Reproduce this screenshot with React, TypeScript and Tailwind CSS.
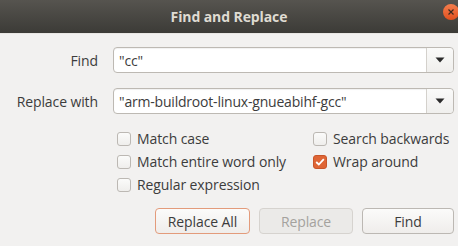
import React from "react";

const Caret = () => (
  <svg width="10" height="6" viewBox="0 0 10 6">
    <path d="M0.5 0.5 L9.5 0.5 L5 5.5 Z" fill="#2b2b2b" />
  </svg>
);

function Combo({ value }: { value: string }) {
  return (
    <div className="flex h-[26px] flex-1 rounded-[4px] border border-[#bdb9b3] bg-white shadow-[inset_0_1px_1px_rgba(0,0,0,0.06)]">
      <div className="flex flex-1 items-center whitespace-nowrap pl-[5px] text-[14px] tracking-[-0.2px] text-[#3c3c3c]">{value}</div>
      <div className="flex w-[27px] items-center justify-center rounded-r-[4px] border-l border-[#d4d1cc] bg-gradient-to-b from-[#fafaf9] to-[#f0efed]">
        <Caret />
      </div>
    </div>
  );
}

function Check({ label, checked }: { label: string; checked?: boolean }) {
  return (
    <div className="flex h-[23px] items-center gap-[6px]">
      {checked ? (
        <div className="flex h-[14px] w-[14px] items-center justify-center rounded-[3px] border border-[#c8552a] bg-[#df6535]">
          <svg width="10" height="8" viewBox="0 0 10 8">
            <path d="M1.2 4 L3.8 6.5 L8.8 1.2" stroke="white" strokeWidth="1.8" fill="none" />
          </svg>
        </div>
      ) : (
        <div className="h-[14px] w-[14px] rounded-[3px] border border-[#bcb8b3] bg-gradient-to-b from-[#fbfbfa] to-[#efeeec]" />
      )}
      <span className="whitespace-nowrap text-[14px] tracking-[-0.1px] text-[#3c3c3c]">{label}</span>
    </div>
  );
}

export default function App() {
  return (
    <div
      className="flex h-[246px] w-[458px] flex-col overflow-hidden bg-[#f2f1f0]"
      style={{ fontFamily: '"Open Sans", "Noto Sans", sans-serif' }}
    >
      <div className="relative flex h-[33px] items-center justify-center bg-gradient-to-b from-[#56544f] to-[#3c3b37]">
        <span className="text-[14px] font-bold tracking-[-0.1px] text-[#dfdbd2]">Find and Replace</span>
        <div className="absolute left-[443px] top-[4px] flex h-[16px] w-[16px] items-center justify-center rounded-full bg-gradient-to-b from-[#f37d4c] to-[#e04f1c]">
          <svg width="6" height="6" viewBox="0 0 6 6">
            <path d="M0.5 0.5 L5.5 5.5 M5.5 0.5 L0.5 5.5" stroke="#3b2a20" strokeWidth="1.2" />
          </svg>
        </div>
      </div>
      <div className="h-px bg-[#e8e6e3]" />
      <div className="flex flex-col gap-[15px] pl-[13px] pr-[4px] pt-[13px]">
        <div className="flex items-center gap-[15px]">
          <div className="w-[85px] whitespace-nowrap text-right text-[14px] tracking-[-0.1px] text-[#3c3c3c]">Find</div>
          <Combo value={'"cc"'} />
        </div>
        <div className="flex items-center gap-[15px]">
          <div className="w-[85px] whitespace-nowrap text-right text-[14px] tracking-[-0.1px] text-[#3c3c3c]">Replace with</div>
          <Combo value={'"arm-buildroot-linux-gnueabihf-gcc"'} />
        </div>
      </div>
      <div className="flex pl-[117px] pt-[13px]">
        <div className="flex w-[196px] flex-col">
          <Check label="Match case" />
          <Check label="Match entire word only" />
          <Check label="Regular expression" />
        </div>
        <div className="flex flex-col">
          <Check label="Search backwards" />
          <Check label="Wrap around" checked />
        </div>
      </div>
      <div className="flex justify-end gap-[9px] pr-[4px] pt-[12px]">
        <button className="h-[26px] w-[95px] rounded-[4px] border border-[#e39b7b] bg-gradient-to-b from-[#fbfbfa] to-[#efedeb] text-[14px] tracking-[-0.1px] text-[#3c3c3c]">
          Replace All
        </button>
        <button className="h-[26px] w-[94px] rounded-[4px] border border-[#d6d3cf] bg-[#ebeae8] text-[14px] tracking-[-0.1px] text-[#a4a29e]">
          Replace
        </button>
        <button className="h-[26px] w-[92px] rounded-[4px] border border-[#bcb8b3] bg-gradient-to-b from-[#fbfbfa] to-[#efedeb] text-[14px] tracking-[-0.1px] text-[#3c3c3c]">
          Find
        </button>
      </div>
    </div>
  );
}
